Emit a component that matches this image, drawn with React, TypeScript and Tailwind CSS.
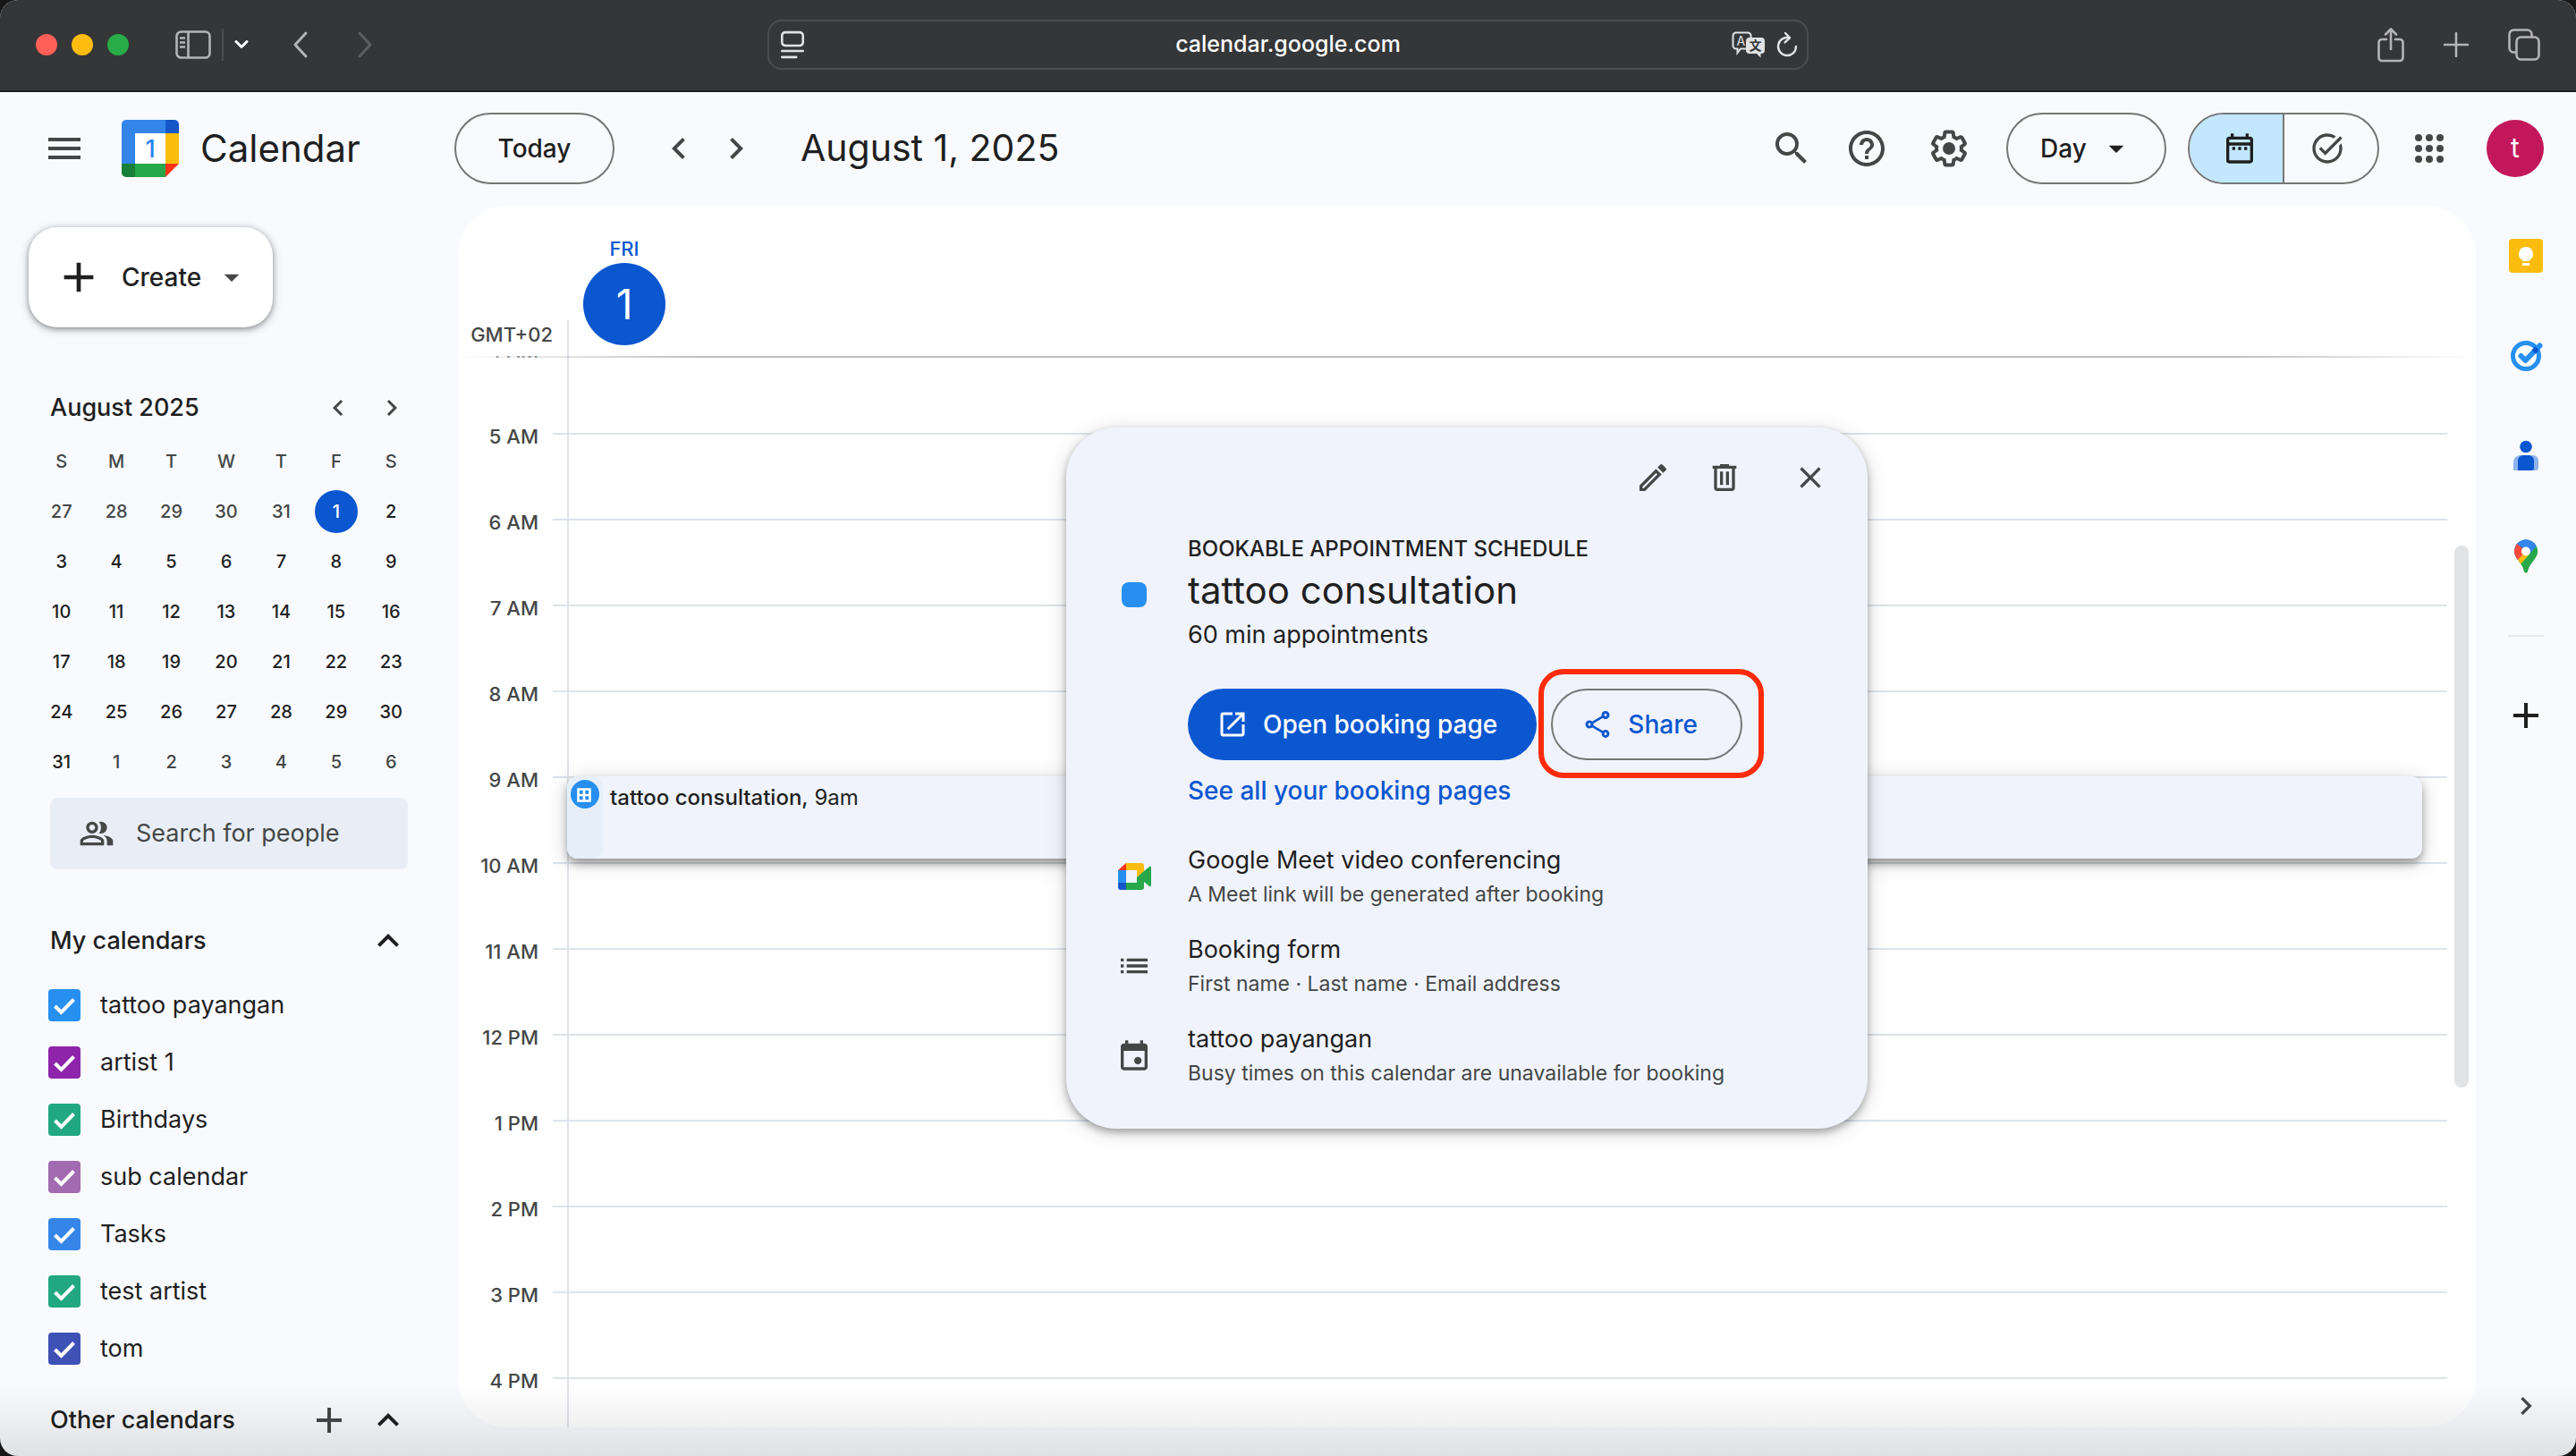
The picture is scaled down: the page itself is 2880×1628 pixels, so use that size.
import { useState } from "react";
import type { ReactNode } from "react";
import {
  MdAdd,
  MdArrowDropDown,
  MdChevronLeft,
  MdChevronRight,
  MdClose,
  MdExpandLess,
  MdHelpOutline,
  MdList,
  MdOpenInNew,
  MdOutlineDateRange,
  MdOutlineModeEdit,
  MdOutlinePeopleAlt,
  MdOutlineShare,
  MdSearch,
  MdTaskAlt,
} from "react-icons/md";

const HOURS = [
  "5 AM",
  "6 AM",
  "7 AM",
  "8 AM",
  "9 AM",
  "10 AM",
  "11 AM",
  "12 PM",
  "1 PM",
  "2 PM",
  "3 PM",
  "4 PM",
];

const WEEKDAYS = ["S", "M", "T", "W", "T", "F", "S"];

const WEEKS = [
  [27, 28, 29, 30, 31, 1, 2],
  [3, 4, 5, 6, 7, 8, 9],
  [10, 11, 12, 13, 14, 15, 16],
  [17, 18, 19, 20, 21, 22, 23],
  [24, 25, 26, 27, 28, 29, 30],
  [31, 1, 2, 3, 4, 5, 6],
];

const CALENDARS = [
  { name: "tattoo payangan", color: "bg-[#268ff0]" },
  { name: "artist 1", color: "bg-[#8e24aa]" },
  { name: "Birthdays", color: "bg-[#21a881]" },
  { name: "sub calendar", color: "bg-[#a26ab0]" },
  { name: "Tasks", color: "bg-[#3585e8]" },
  { name: "test artist", color: "bg-[#21a881]" },
  { name: "tom", color: "bg-[#3f51b5]" },
];

export default function App() {
  return (
    <div className="h-screen bg-[#161616] font-['Inter',sans-serif] text-[#1f1f1f]">
      <div className="relative flex h-full flex-col overflow-hidden rounded-[20px] bg-[#f8fafd]">
        <BrowserBar />
        <TopBar />
        <div className="flex min-h-0 flex-1">
          <Sidebar />
          <DayView />
          <SideRail />
        </div>
        <div className="pointer-events-none absolute inset-x-0 bottom-0 h-20 bg-linear-to-t from-black/10 to-transparent" />
      </div>
    </div>
  );
}

function BrowserBar() {
  return (
    <div className="flex h-[103px] shrink-0 items-center justify-between border-b-2 border-[#1d1d1e] bg-[#353638] px-10 pb-0.5 text-[#b4b4b6]">
      <div className="flex w-[818px] items-center">
        <div className="flex gap-4">
          <span className="size-6 rounded-full bg-[#ff5f57]" />
          <span className="size-6 rounded-full bg-[#febc11]" />
          <span className="size-6 rounded-full bg-[#28ac47]" />
        </div>
        <button aria-label="Sidebar" className="ml-13">
          <svg viewBox="0 0 40 32" className="h-8 w-10" fill="none" stroke="currentColor" strokeWidth="2.6">
            <rect x="1.5" y="1.5" width="37" height="29" rx="5" />
            <path d="M14.500 2v28M5 8.500h6M5 13.500h6M5 18.500h6" />
          </svg>
        </button>
        <span className="ml-3 h-9 w-0.5 bg-[#4a4b4d]" />
        <button aria-label="Tab groups" className="ml-3 text-white">
          <svg viewBox="0 0 16 16" className="size-4" fill="none" stroke="currentColor" strokeWidth="3" strokeLinecap="round" strokeLinejoin="round">
            <path d="M2 4.500l6 6 6-6" />
          </svg>
        </button>
        <button aria-label="Back" className="ml-12">
          <SafariChevron path="M16 3L4 16l12 13" />
        </button>
        <button aria-label="Forward" className="ml-13 text-[#5d5e60]">
          <SafariChevron path="M4 3l12 13L4 29" />
        </button>
      </div>
      <div className="flex h-14 w-[1165px] items-center rounded-2xl border-2 border-[#4c4d4f] pr-2.5 pl-3 text-[#e2e2e3]">
        <svg viewBox="0 0 26 30" className="h-8 w-7 shrink-0" fill="none" stroke="currentColor" strokeWidth="2.400" strokeLinecap="round">
          <rect x="2" y="2" width="22" height="14" rx="3.500" />
          <path d="M2 21.500h22M2 28h15" />
        </svg>
        <input
          aria-label="Address"
          defaultValue="calendar.google.com"
          className="min-w-0 flex-1 bg-transparent pl-11 text-center text-[25px] font-medium text-white outline-none"
        />
        <TranslateIcon />
        <button aria-label="Reload" className="ml-3">
          <svg viewBox="0 0 24 30" className="h-8 w-6" fill="none" stroke="currentColor" strokeWidth="2.400" strokeLinecap="round" strokeLinejoin="round">
            <path d="M14 7.200A10 10 0 1 0 22 17M10 2l5 5.400-5.500 5" />
          </svg>
        </button>
      </div>
      <div className="flex w-[818px] items-center justify-end gap-11">
        <button aria-label="Share page">
          <svg viewBox="0 0 30 40" className="h-10 w-[30px]" fill="none" stroke="currentColor" strokeWidth="2.600" strokeLinecap="round" strokeLinejoin="round">
            <path d="M10 14H5a3.500 3.500 0 0 0-3.500 3.500v17A3.500 3.500 0 0 0 5 38h20a3.500 3.500 0 0 0 3.500-3.500v-17A3.500 3.500 0 0 0 25 14h-5M15 25V3M9 8.500L15 2.500l6 6" />
          </svg>
        </button>
        <button aria-label="New tab">
          <svg viewBox="0 0 28 28" className="size-7" stroke="currentColor" strokeWidth="2.600" strokeLinecap="round">
            <path d="M14 1v26M1 14h26" />
          </svg>
        </button>
        <button aria-label="Tab overview">
          <svg viewBox="0 0 36 36" className="size-9" fill="none" stroke="currentColor" strokeWidth="2.600" strokeLinejoin="round">
            <rect x="9.500" y="9.500" width="25" height="25" rx="5" />
            <path d="M9 26.500H6.500a5 5 0 0 1-5-5v-15a5 5 0 0 1 5-5h15a5 5 0 0 1 5 5V9" />
          </svg>
        </button>
      </div>
    </div>
  );
}

function SafariChevron({ path }: { path: string }) {
  return (
    <svg viewBox="0 0 20 32" className="h-8 w-5" fill="none" stroke="currentColor" strokeWidth="3" strokeLinecap="round" strokeLinejoin="round">
      <path d={path} />
    </svg>
  );
}

function TranslateIcon() {
  return (
    <svg viewBox="0 0 38 30" className="h-[30px] w-[38px] shrink-0">
      <path d="M5 1.500h13a3.500 3.500 0 0 1 3.500 3.500v11a3.500 3.500 0 0 1-3.500 3.500h-8L6.500 24v-4.500H5A3.500 3.500 0 0 1 1.500 16V5A3.500 3.500 0 0 1 5 1.500z" fill="none" stroke="currentColor" strokeWidth="2" />
      <path d="M20 7h13a4 4 0 0 1 4 4v10a4 4 0 0 1-4 4h-.5v4.500L28 25h-8a4 4 0 0 1-4-4V11a4 4 0 0 1 4-4z" fill="currentColor" />
      <text x="5.500" y="15.500" fontSize="14" fontFamily="Inter" fill="currentColor">A</text>
      <text x="19.500" y="21" fontSize="14" fontFamily="Noto Sans CJK SC" fontWeight="700" fill="#353638">文</text>
    </svg>
  );
}

function TopBar() {
  return (
    <header className="flex h-[127px] shrink-0 items-center pr-9 pb-0.5 text-[#444746]">
      <div className="flex w-[508px] items-center">
        <button aria-label="Main menu" className="ml-[54px] flex h-6 w-9 flex-col justify-between">
          <span className="h-1 w-full bg-current" />
          <span className="h-1 w-full bg-current" />
          <span className="h-1 w-full bg-current" />
        </button>
        <CalendarLogo />
        <span className="ml-6 text-[42px] text-[#1f1f1f]">Calendar</span>
      </div>
      <button className="h-20 w-[179px] rounded-full border-2 border-[#747775] text-[28px] font-medium text-[#1f1f1f]">
        Today
      </button>
      <button aria-label="Previous day" className="ml-12">
        <MdChevronLeft className="size-12" />
      </button>
      <button aria-label="Next day" className="ml-4">
        <MdChevronRight className="size-12" />
      </button>
      <h1 className="ml-12 text-[41px] text-[#1f1f1f]">August 1, 2025</h1>
      <div className="ml-auto flex items-center">
        <button aria-label="Search">
          <MdSearch className="size-12" />
        </button>
        <button aria-label="Support" className="ml-9">
          <MdHelpOutline className="size-12" />
        </button>
        <button aria-label="Settings" className="ml-11">
          <SettingsIcon />
        </button>
        <div className="relative ml-10">
          <select
            aria-label="View"
            defaultValue="day"
            className="h-20 w-[179px] appearance-none rounded-full border-2 border-[#747775] pl-9 text-[28px] font-medium text-[#1f1f1f]"
          >
            <option value="day">Day</option>
            <option value="week">Week</option>
            <option value="month">Month</option>
          </select>
          <MdArrowDropDown className="pointer-events-none absolute top-5 right-9 size-10 text-[#1f1f1f]" />
        </div>
        <div className="ml-6 flex h-20 w-[214px] overflow-hidden rounded-full border-2 border-[#747775]">
          <button aria-label="Calendar view" className="flex flex-1 items-center justify-center border-r-2 border-[#747775] bg-[#c2e7ff] pl-2 text-[#1f1f1f]">
            <MdOutlineDateRange className="size-10" />
          </button>
          <button aria-label="Tasks view" className="flex flex-1 items-center justify-center pr-2">
            <MdTaskAlt className="size-10" />
          </button>
        </div>
        <button aria-label="Google apps" className="ml-10">
          <svg viewBox="0 0 32 32" className="size-8" fill="currentColor">
            {[4, 16, 28].map((y) =>
              [4, 16, 28].map((x) => <circle key={`${x}-${y}`} cx={x} cy={y} r="4" />)
            )}
          </svg>
        </button>
        <button aria-label="Account" className="ml-12 size-16 rounded-full bg-[#c2185b] text-[30px] text-white">
          t
        </button>
      </div>
    </header>
  );
}

function CalendarLogo() {
  return (
    <svg viewBox="0 0 64 64" className="ml-[46px] size-16">
      <path d="M5 0h44v15H15v34H0V5a5 5 0 0 1 5-5z" fill="#3485ea" />
      <path d="M49 0h10a5 5 0 0 1 5 5v10H49z" fill="#1557c9" />
      <path d="M49 15h15v34H49z" fill="#fbbc0e" />
      <path d="M15 49h34v15H15z" fill="#27a84a" />
      <path d="M0 49h15v15H5a5 5 0 0 1-5-5z" fill="#188038" />
      <path d="M49 49h15L49 64z" fill="#fc3316" />
      <path d="M15 15h34v34H15z" fill="#fff" />
      <text x="32" y="42" textAnchor="middle" fontSize="27" fontWeight="500" fontFamily="Inter" fill="#2684f0">1</text>
    </svg>
  );
}

function SettingsIcon() {
  return (
    <svg viewBox="0 0 24 24" className="size-12" fill="currentColor">
      <path d="M13.850 22.250h-3.700c-.74 0-1.360-.54-1.450-1.270l-.27-1.890c-.27-.14-.53-.29-.79-.46l-1.800.72c-.7.26-1.470-.03-1.810-.65L2.200 15.530c-.35-.66-.2-1.440.36-1.880l1.530-1.190c-.01-.15-.02-.3-.02-.46 0-.15.01-.31.02-.46l-1.520-1.190c-.59-.45-.74-1.260-.37-1.880l1.850-3.190c.34-.62 1.110-.9 1.790-.63l1.810.73c.26-.17.52-.32.78-.46l.27-1.910c.09-.7.71-1.250 1.440-1.250h3.700c.74 0 1.360.54 1.450 1.270l.27 1.890c.27.14.53.29.79.46l1.800-.72c.71-.26 1.480.03 1.820.65l1.840 3.180c.36.66.2 1.440-.36 1.880l-1.520 1.190c.01.15.02.3.02.46s-.01.31-.02.46l1.520 1.190c.56.45.72 1.230.37 1.860l-1.860 3.220c-.34.62-1.110.9-1.800.63l-1.800-.72c-.26.17-.52.32-.78.46l-.27 1.910c-.1.68-.72 1.220-1.460 1.220zm-3.230-2h2.760l.37-2.550.53-.22c.44-.18.88-.44 1.340-.78l.45-.34 2.380.96 1.380-2.400-2.030-1.580.07-.56c.03-.26.06-.51.06-.78s-.03-.53-.06-.78l-.07-.56 2.030-1.580-1.390-2.400-2.390.96-.45-.35c-.42-.32-.87-.58-1.330-.77l-.52-.22-.37-2.550h-2.760l-.37 2.550-.53.21c-.44.19-.88.44-1.340.79l-.45.33-2.380-.95-1.390 2.390 2.030 1.580-.07.56a7 7 0 0 0-.06.79c0 .26.02.53.06.78l.07.56-2.030 1.580 1.380 2.400 2.390-.96.45.35c.43.33.86.58 1.330.77l.53.22.38 2.550z" />
      <circle cx="12" cy="12" r="3.500" />
    </svg>
  );
}

function Sidebar() {
  return (
    <aside className="w-[512px] shrink-0 overflow-hidden">
      <button className="mt-6 ml-8 flex h-28 w-[273px] items-center rounded-[32px] bg-white pl-8 text-[28px] font-medium shadow-[0_2px_6px_rgba(60,64,67,0.5),0_2px_12px_rgba(60,64,67,0.2)]">
        <MdAdd className="-ml-1 size-14 shrink-0" />
        <span className="ml-5">Create</span>
        <MdArrowDropDown className="ml-3.5 size-10 text-[#444746]" />
      </button>
      <MiniCalendar />
      <label className="mt-3 ml-14 flex h-20 w-[400px] items-center gap-6 rounded-lg bg-[#e9eef6] pl-8 text-[#444746]">
        <MdOutlinePeopleAlt className="size-10 shrink-0" />
        <input
          type="text"
          aria-label="Search for people"
          placeholder="Search for people"
          className="w-full bg-transparent text-[27px] outline-none placeholder:text-[#444746]"
        />
      </label>
      <div className="mt-10 mr-[54px] ml-14 flex h-20 items-center justify-between">
        <h2 className="text-[27px] font-medium">My calendars</h2>
        <button aria-label="Collapse my calendars">
          <MdExpandLess className="size-12" />
        </button>
      </div>
      <ul>
        {CALENDARS.map((calendar) => (
          <CalendarRow key={calendar.name} name={calendar.name} color={calendar.color} />
        ))}
      </ul>
      <div className="mt-2 mr-[54px] ml-14 flex h-20 items-center">
        <h2 className="flex-1 text-[27px] font-medium">Other calendars</h2>
        <button aria-label="Add other calendars">
          <MdAdd className="size-12 text-[#444746]" />
        </button>
        <button aria-label="Collapse other calendars" className="ml-[18px]">
          <MdExpandLess className="size-12" />
        </button>
      </div>
    </aside>
  );
}

function CalendarRow({ name, color }: { name: string; color: string }) {
  const [checked, setChecked] = useState(true);

  return (
    <li>
      <label className="ml-[54px] flex h-16 items-center text-[27px]">
        <span className="relative flex size-9">
          <input
            type="checkbox"
            checked={checked}
            onChange={() => setChecked(!checked)}
            className={`size-9 appearance-none rounded ${color}`}
          />
          {checked && (
            <svg viewBox="0 0 36 36" className="pointer-events-none absolute inset-0 size-9">
              <path d="M7.500 19l7 7L28.500 11.500" fill="none" stroke="#fff" strokeWidth="4" />
            </svg>
          )}
        </span>
        <span className="ml-[22px]">{name}</span>
      </label>
    </li>
  );
}

function MiniCalendar() {
  return (
    <div className="mt-[62px] ml-[38px] w-[430px]">
      <div className="flex h-14 items-center pl-[18px] text-[#444746]">
        <h2 className="flex-1 text-[27px] font-medium text-[#1f1f1f]">August 2025</h2>
        <button aria-label="Previous month">
          <MdChevronLeft className="size-9" />
        </button>
        <button aria-label="Next month" className="mr-3 ml-6">
          <MdChevronRight className="size-9" />
        </button>
      </div>
      <table className="mt-1 w-full table-fixed text-center text-[20px] font-medium">
        <thead>
          <tr className="h-14 text-[#444746]">
            {WEEKDAYS.map((day, index) => (
              <th key={index} className="p-0 font-medium">
                {day}
              </th>
            ))}
          </tr>
        </thead>
        <tbody>
          {WEEKS.map((week, row) => (
            <tr key={row} className="h-14">
              {week.map((day, column) => (
                <td key={column} className="p-0">
                  <span
                    className={`mx-auto flex size-12 items-center justify-center rounded-full ${dayStyle(row, day)}`}
                  >
                    {day}
                  </span>
                </td>
              ))}
            </tr>
          ))}
        </tbody>
      </table>
    </div>
  );
}

function dayStyle(row: number, day: number) {
  if (row === 0 && day === 1) return "bg-[#0b57d0] text-white";

  // days that belong to the neighbouring months
  if ((row === 0 && day > 20) || (row === 5 && day < 20)) return "text-[#444746]";

  return "text-[#1f1f1f]";
}

function DayView() {
  return (
    <main className="relative mb-8 flex min-w-0 flex-1 flex-col rounded-[56px] bg-white">
      <div className="relative z-10 flex h-[168px] shrink-0">
        <div className="flex w-[122px] items-end justify-end pr-4 pb-2 text-[22px] leading-8 font-medium text-[#444746]">
          GMT+02
        </div>
        <div className="mt-32 w-0.5 bg-[#dde3ea]" />
        <div className="ml-4 flex w-[92px] flex-col items-center pt-9 text-[#0b57d0]">
          <span className="text-[22px] leading-6 font-medium">FRI</span>
          <span className="mt-1 flex size-[92px] items-center justify-center rounded-full bg-[#0b57d0] text-[46px] text-white">
            1
          </span>
        </div>
        <div className="absolute inset-x-0 -bottom-0.5 h-0.5 bg-[linear-gradient(to_right,transparent,rgba(0,0,0,0.25)_12%,rgba(0,0,0,0.25)_88%,transparent)]" />
      </div>
      <div className="relative flex min-h-0 flex-1 overflow-hidden rounded-b-[56px]">
        <div className="w-[90px] shrink-0 text-right text-[22px] leading-8 font-medium text-[#444746]">
          {/* the previous hour is scrolled under the header */}
          <div className="flex h-[74px] items-start justify-end text-[#9a9c9c]">
            <span className="-mt-[22px]">4 AM</span>
          </div>
          {HOURS.map((hour) => (
            <div key={hour} className="h-24">
              {hour}
            </div>
          ))}
        </div>
        <div className="relative mr-8 ml-4 flex-1 pt-[86px]">
          {HOURS.map((hour) => (
            <div key={hour} className="h-24 border-t-2 border-[#dde3ea]" />
          ))}
          <div className="absolute inset-y-0 left-4 w-0.5 bg-[#dde3ea]" />
          <EventBlock />
        </div>
      </div>
      <div className="absolute top-[380px] right-2 h-[606px] w-4 rounded-full bg-[#e1e3e4]" />
      <EventPopover />
    </main>
  );
}

function EventBlock() {
  return (
    <button className="absolute top-[470px] right-7 left-4 flex h-[92px] items-start rounded-xl bg-[#f0f3fb] text-left text-[24px] shadow-[0_6px_8px_rgba(0,0,0,0.3),0_4px_24px_rgba(0,0,0,0.18)]">
      <span className="flex h-full w-10 justify-center rounded-xl bg-[#e6eff9] pt-1">
        <svg viewBox="0 0 32 32" className="size-8">
          <circle cx="16" cy="16" r="16" fill="#268ff0" />
          <path d="M8.500 10.500h13v13h-13zM15 10.500v13M8.500 17h13" fill="none" stroke="#fff" strokeWidth="2.600" />
        </svg>
      </span>
      <span className="ml-2 pt-1.5">
        <span className="font-medium">tattoo consultation,</span> 9am
      </span>
    </button>
  );
}

function EventPopover() {
  return (
    <section
      role="dialog"
      aria-label="tattoo consultation"
      className="absolute top-[248px] left-1/2 z-20 w-[896px] -translate-x-1/2 rounded-[56px] bg-[#f0f3fb] pb-5 shadow-[0_4px_8px_rgba(0,0,0,0.3),0_4px_24px_rgba(0,0,0,0.15)]"
    >
      <div className="flex h-28 items-center justify-end pr-11 text-[#444746]">
        <button aria-label="Edit">
          <MdOutlineModeEdit className="size-10" />
        </button>
        <button aria-label="Delete" className="ml-10">
          <svg viewBox="0 0 24 24" className="size-10" fill="currentColor">
            <path d="M15 4V3H9v1H4v2h1v13c0 1.100.9 2 2 2h10c1.100 0 2-.9 2-2V6h1V4h-5zm2 15H7V6h10v13zM9 8h2v9H9zM13 8h2v9h-2z" />
          </svg>
        </button>
        <button aria-label="Close" className="ml-14">
          <MdClose className="size-10" />
        </button>
      </div>

      <div className="flex">
        <div className="w-[136px] pt-[61px] pl-[62px]">
          <div className="size-7 rounded-lg bg-[#268ff0]" />
        </div>
        <div>
          <p className="pt-2 text-[24px] leading-8 font-medium">BOOKABLE APPOINTMENT SCHEDULE</p>
          <h2 className="mt-0.5 text-[42px] leading-[56px]">tattoo consultation</h2>
          <p className="mt-0.5 text-[27px] leading-10">60 min appointments</p>
          <div className="mt-10 flex gap-4 text-[28px] font-medium">
            <button className="flex h-20 items-center gap-4 rounded-full bg-[#0b57d0] pr-11 pl-8 text-white">
              <MdOpenInNew className="size-9" />
              Open booking page
            </button>
            <div className="relative">
              <button className="flex h-20 items-center gap-4 rounded-full border-2 border-[#747775] pr-12 pl-8 text-[#0b57d0]">
                <MdOutlineShare className="size-9" />
                Share
              </button>
              <div className="pointer-events-none absolute -top-[22px] -right-6 -bottom-5 -left-3.5 rounded-[28px] border-6 border-[#fc2b0a]" />
            </div>
          </div>
          <a href="#booking-pages" className="mt-3 block text-[28px] leading-11 font-medium text-[#0b57d0]">
            See all your booking pages
          </a>
        </div>
      </div>

      <div className="mt-9 flex flex-col">
        <DetailRow
          icon={<MeetIcon />}
          title="Google Meet video conferencing"
          text="A Meet link will be generated after booking"
        />
        <DetailRow
          icon={<MdList className="size-10" />}
          title="Booking form"
          text="First name · Last name · Email address"
        />
        <DetailRow
          icon={<EventIcon />}
          title="tattoo payangan"
          text="Busy times on this calendar are unavailable for booking"
        />
      </div>
    </section>
  );
}

function DetailRow({ icon, title, text }: { icon: ReactNode; title: string; text: string }) {
  return (
    <div className="flex h-[100px] items-start text-[#444746]">
      <div className="mt-[18px] ml-14 flex w-20 items-center">{icon}</div>
      <div>
        <p className="text-[27px] leading-10 text-[#1f1f1f]">{title}</p>
        <p className="text-[23px] leading-9">{text}</p>
      </div>
    </div>
  );
}

function MeetIcon() {
  return (
    <svg viewBox="0 0 40 40" className="size-10">
      <path d="M2 13L11 5v8z" fill="#fc3316" />
      <path d="M2 13h9v14H2z" fill="#268ff0" />
      <path d="M2 27h9v8H5a3 3 0 0 1-3-3z" fill="#1557c9" />
      <path d="M11 5h17a3 3 0 0 1 3 3v6l-8 7v-8H11z" fill="#fbbc0e" />
      <path d="M11 27h12v-6l8-7v18a3 3 0 0 1-3 3H11zM31 14l6-5c1-.8 2-.2 2 1v20c0 1.200-1 1.800-2 1l-6-5z" fill="#27a84a" />
    </svg>
  );
}

function EventIcon() {
  return (
    <svg viewBox="0 0 24 24" className="size-10" fill="currentColor">
      <path d="M19 4h-1V2h-2v2H8V2H6v2H5c-1.100 0-2 .9-2 2v14c0 1.100.9 2 2 2h14c1.100 0 2-.9 2-2V6c0-1.100-.9-2-2-2zm0 16H5V9h14v11z" />
      <circle cx="14.500" cy="15.500" r="2.500" />
    </svg>
  );
}

function SideRail() {
  return (
    <nav className="flex w-28 shrink-0 flex-col items-center pt-9">
      <button aria-label="Keep">
        <svg viewBox="0 0 40 40" className="size-10">
          <rect x="1" y="1" width="38" height="38" rx="4" fill="#fbbc0e" />
          <path d="M20 10a8 8 0 0 0-4 14.900V26h8v-1.100A8 8 0 0 0 20 10zM16 28h8v3h-8z" fill="#fff" />
        </svg>
      </button>
      <button aria-label="Tasks" className="mt-[72px]">
        <svg viewBox="0 0 40 40" className="size-10">
          <circle cx="20" cy="20" r="14.500" fill="none" stroke="#268ff0" strokeWidth="5" />
          <path d="M14.500 20l5 5L35.500 8.500" fill="none" stroke="#268ff0" strokeWidth="6" strokeLinecap="round" strokeLinejoin="round" />
          <path d="M26.500 13.500l4-4.200 4.300 4.200-4 4.200z" fill="#0b57d0" />
        </svg>
      </button>
      <button aria-label="Contacts" className="mt-[72px]">
        <svg viewBox="0 0 40 40" className="size-10">
          <path d="M14 19h14a6 6 0 0 1 6 6v8a3 3 0 0 1-3 3H6V27a8 8 0 0 1 8-8z" fill="#8fb3ee" />
          <path d="M17 19h6a6 6 0 0 1 6 6v8a3 3 0 0 1-3 3H11V25a6 6 0 0 1 6-6z" fill="#0b57d0" />
          <circle cx="20" cy="9.500" r="6.800" fill="#0b57d0" />
        </svg>
      </button>
      <button aria-label="Maps" className="mt-[72px]">
        <svg viewBox="0 0 40 40" className="size-10">
          <clipPath id="pin">
            <path d="M20 1.500A13 13 0 0 0 7 14.500c0 8.500 9 12 11 22 .4 2.600 3.600 2.600 4 0 2-10 11-13.500 11-22a13 13 0 0 0-13-13z" />
          </clipPath>
          <g clipPath="url(#pin)">
            <path d="M0 0h40v40H0z" fill="#27a84a" />
            <path d="M0 0h40L20 14.500z" fill="#3485ea" />
            <path d="M32 0v9L14 29 0 20 9 0z" fill="#3485ea" />
            <path d="M10 6l10 8.500L9 27 0 20V0z" fill="#fc4a3c" />
            <path d="M20 14.500L8 27l5 5 13-12z" fill="#fbbc0e" />
            <path d="M14 29L32 8.500 40 12v28H14z" fill="#27a84a" />
          </g>
          <circle cx="20" cy="14.500" r="5" fill="#fff" />
        </svg>
      </button>
      <span className="mt-[68px] h-0.5 w-10 bg-[#e4e6ea]" />
      <button aria-label="Get add-ons" className="mt-16">
        <MdAdd className="size-12" />
      </button>
      <button aria-label="Hide side panel" className="mt-auto mb-9 text-[#444746]">
        <MdChevronRight className="size-10" />
      </button>
    </nav>
  );
}
